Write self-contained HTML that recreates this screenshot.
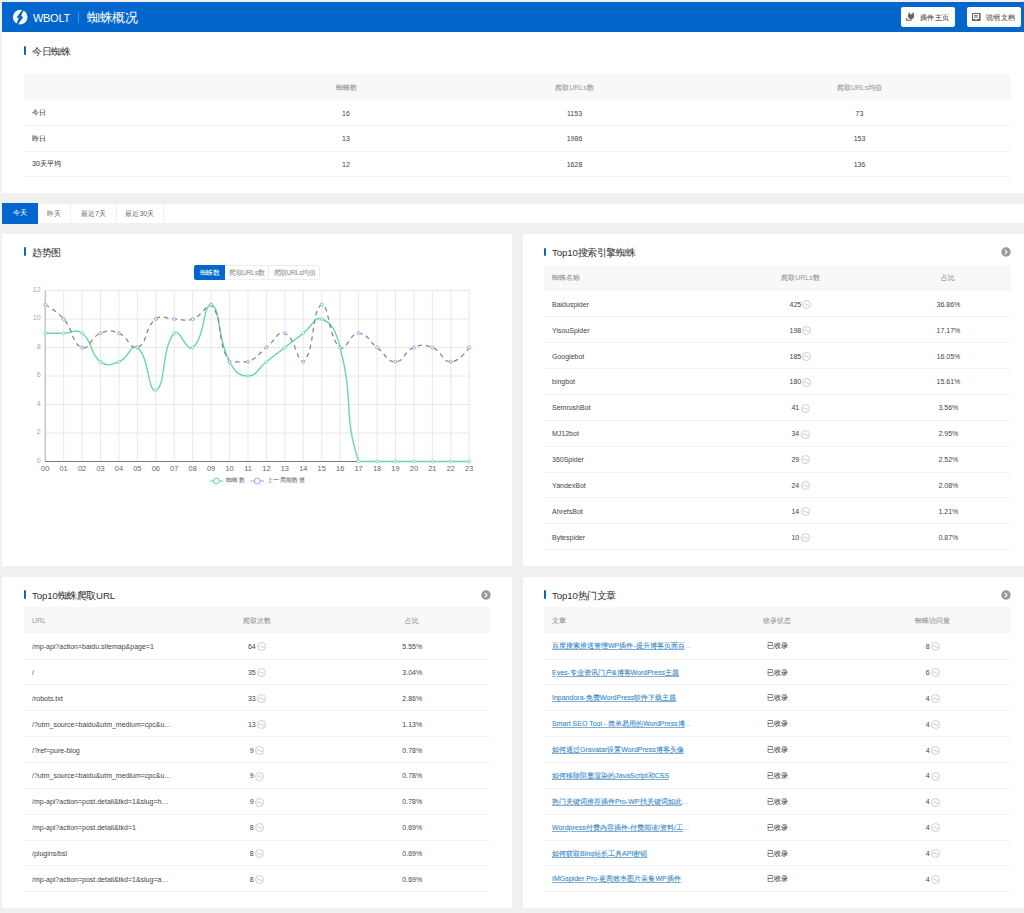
<!DOCTYPE html><html><head><meta charset="utf-8"><style>
*{margin:0;padding:0;box-sizing:border-box}
html,body{width:1024px;height:913px;overflow:hidden;background:#f0f0f1;font-family:"Liberation Sans",sans-serif;color:#333}
.ttl{-webkit-text-stroke:0.03px currentColor}.tbl th .cj{-webkit-text-stroke:0.1px currentColor}.cj{-webkit-text-stroke:0.08px currentColor}
.abs{position:absolute}
.card{position:absolute;background:#fff}
.bar{position:absolute;width:2px;height:8.5px;background:#0366cc;border-radius:1px}
.ttl{position:absolute;font-size:10px;line-height:12px;color:#333;white-space:nowrap;letter-spacing:-0.1px;transform:scale(0.965);transform-origin:left top}
.sc{display:inline-block;transform-origin:center center}
.tbl{position:absolute;border-collapse:collapse;table-layout:fixed;font-size:7px;color:#444}
.tbl th{background:#f8f8f8;color:#999;font-weight:normal;height:26px;padding:1px 8px 0;white-space:nowrap}
.tbl td{border-bottom:1px solid #f3f3f3;padding:1.1px 8px 0;white-space:nowrap;overflow:hidden;text-overflow:ellipsis}
.l{text-align:left}.c{text-align:center}
.ico{display:inline-block;vertical-align:middle;margin:-4px 0 -4px 1.3px;position:relative;top:-0.4px}
.arr{position:absolute;width:9.5px;height:9.5px;border-radius:50%;background:#999}
a{color:#3385c4;text-decoration:underline;text-decoration-thickness:0.6px;text-decoration-color:#7fb0d8}
.tbl td.lk{color:#aaa}
</style></head><body><div class="abs" style="left:2px;top:2px;width:1022px;height:30px;background:#0366cc"></div>
<svg class="abs" style="left:0;top:0" width="40" height="32"><circle cx="20.2" cy="17.1" r="7.3" fill="#fff"/><polygon points="22.49,9.45 23.80,9.98 21.17,15.76 23.14,17.30 18.11,24.31 16.57,23.65 18.76,18.06 16.57,17.41" fill="#0366cc"/></svg>
<div class="abs" style="left:33px;top:11.8px;font-size:11px;line-height:12px;color:#fff;letter-spacing:-0.3px">WBOLT</div>
<div class="abs" style="left:78px;top:11.5px;width:1px;height:11px;background:#3a9ad0"></div>
<div class="abs" style="left:87px;top:11px;font-size:13px;line-height:14px;color:#fff;white-space:nowrap;transform:scale(0.977);transform-origin:left top">蜘蛛概况</div>
<div class="abs" style="left:900.5px;top:7px;width:54.89999999999998px;height:19.5px;background:#fff;border-radius:2px"></div>
<svg class="abs" style="left:0;top:0" width="1024" height="32">
<rect x="908.6" y="12.7" width="1.5" height="2.4" fill="#666"/><rect x="912.2" y="12.7" width="1.5" height="2.4" fill="#666"/>
<path d="M908 14.3 L914.1 14.3 L914.1 15.9 Q914.1 18.7 911.05 18.9 Q908 18.7 908 15.9 Z" fill="#666"/>
<path d="M911.05 18.6 L911.05 20.2 L906.7 20.2 L906.7 17.9" fill="none" stroke="#666" stroke-width="1.1"/>
</svg>
<div class="abs cj" style="left:919.8px;top:13px;font-size:8px;line-height:9px;color:#444;white-space:nowrap;transform:scale(0.93);transform-origin:left top">插件主页</div>
<div class="abs" style="left:966.6px;top:7px;width:54.89999999999998px;height:19.5px;background:#fff;border-radius:2px"></div>
<svg class="abs" style="left:972px;top:12.8px" width="9" height="8.2" viewBox="0 0 9 8.2">
<rect x="0" y="0" width="8.6" height="8.0" rx="0.6" fill="#666"/>
<rect x="1.0" y="1.0" width="6.0" height="4.9" fill="#fff"/>
<rect x="2.1" y="2.2" width="3.7" height="0.9" fill="#666"/>
<rect x="2.1" y="3.6" width="3.7" height="1.0" fill="#666"/>
<ellipse cx="4.0" cy="5.7" rx="1.25" ry="1.05" fill="#fff"/>
</svg>
<div class="abs cj" style="left:985.9px;top:13px;font-size:8px;line-height:9px;color:#444;white-space:nowrap;transform:scale(0.93);transform-origin:left top">说明文档</div>
<div class="card" style="left:2px;top:32px;width:1030px;height:160.5px"></div>
<div class="bar" style="left:23.5px;top:46px"></div>
<div class="ttl" style="left:31.5px;top:45.7px">今日蜘蛛</div>
<table class="tbl" style="left:24px;top:74px;width:987px"><colgroup><col style="width:227px"><col style="width:190px"><col style="width:267px"><col style="width:303px"></colgroup><tr><th class="l" style="height:26px"></th><th class="c" style="height:26px"><span class="cj">蜘蛛数</span></th><th class="c" style="height:26px"><span class="cj">爬取</span>URLs<span class="cj">数</span></th><th class="c" style="height:26px"><span class="cj">爬取</span>URLs<span class="cj">均值</span></th></tr><tr><td class="l " style="height:25.5px"><span class=cj>今日</span></td><td class="c" style="height:25.5px">16</td><td class="c" style="height:25.5px">1153</td><td class="c" style="height:25.5px">73</td></tr><tr><td class="l " style="height:25.5px"><span class=cj>昨日</span></td><td class="c" style="height:25.5px">13</td><td class="c" style="height:25.5px">1986</td><td class="c" style="height:25.5px">153</td></tr><tr><td class="l " style="height:25.5px"><span class=cj>30天平均</span></td><td class="c" style="height:25.5px">12</td><td class="c" style="height:25.5px">1628</td><td class="c" style="height:25.5px">136</td></tr></table>
<div class="abs" style="left:2px;top:203.6px;width:1022px;height:19.3px;background:#fff"></div>
<div class="abs" style="left:2px;top:203px;width:35.5px;height:20.6px;background:#0366cc;color:#fff;font-size:7px;line-height:20.6px;text-align:center">今天</div>
<div class="abs" style="left:37.5px;top:203.6px;width:33.8px;height:19.3px;border-right:1px solid #f0f0f0;color:#666;font-size:7px;line-height:19.3px;text-align:center">昨天</div>
<div class="abs" style="left:71.3px;top:203.6px;width:45.3px;height:19.3px;border-right:1px solid #f0f0f0;color:#666;font-size:7px;line-height:19.3px;text-align:center">最近7天</div>
<div class="abs" style="left:116.6px;top:203.6px;width:47.400000000000006px;height:19.3px;border-right:1px solid #f0f0f0;color:#666;font-size:7px;line-height:19.3px;text-align:center">最近30天</div>
<div class="card" style="left:2px;top:234px;width:510px;height:332px"></div>
<div class="bar" style="left:23.5px;top:247.2px"></div>
<div class="ttl" style="left:31.5px;top:246.89999999999998px">趋势图</div>
<div class="abs" style="left:194px;top:265.2px;width:125.5px;height:14.8px;border:1px solid #eee;border-radius:2px"></div>
<div class="abs" style="left:194px;top:265.2px;width:31px;height:14.8px;background:#0366cc;border-radius:2px 0 0 2px;color:#fff;font-size:7px;line-height:16.6px;text-align:center"><span class="sc" style="transform:scale(0.93)">蜘蛛数</span></div>
<div class="abs" style="left:225px;top:265.2px;width:44px;height:14.8px;border-right:1px solid #eee;color:#888;font-size:7px;line-height:16.6px;text-align:center;letter-spacing:-0.1px"><span class="sc" style="transform:scale(0.93)">爬取URLs数</span></div>
<div class="abs" style="left:269px;top:265.2px;width:50.5px;height:14.8px;color:#888;font-size:7px;line-height:16.6px;text-align:center;letter-spacing:-0.1px"><span class="sc" style="transform:scale(0.93)">爬取URLs均值</span></div>
<svg class="abs" style="left:0;top:0" width="512" height="566" viewBox="0 0 512 566"><text x="40.8" y="462.90" font-size="7.2" fill="#aaa" text-anchor="end" font-family="Liberation Sans">0</text><line x1="45.20" y1="433.00" x2="469.20" y2="433.00" stroke="#e8e8e8" stroke-width="1"/><text x="40.8" y="434.40" font-size="7.2" fill="#aaa" text-anchor="end" font-family="Liberation Sans">2</text><line x1="45.20" y1="404.50" x2="469.20" y2="404.50" stroke="#e8e8e8" stroke-width="1"/><text x="40.8" y="405.90" font-size="7.2" fill="#aaa" text-anchor="end" font-family="Liberation Sans">4</text><line x1="45.20" y1="376.00" x2="469.20" y2="376.00" stroke="#e8e8e8" stroke-width="1"/><text x="40.8" y="377.40" font-size="7.2" fill="#aaa" text-anchor="end" font-family="Liberation Sans">6</text><line x1="45.20" y1="347.50" x2="469.20" y2="347.50" stroke="#e8e8e8" stroke-width="1"/><text x="40.8" y="348.90" font-size="7.2" fill="#aaa" text-anchor="end" font-family="Liberation Sans">8</text><line x1="45.20" y1="319.00" x2="469.20" y2="319.00" stroke="#e8e8e8" stroke-width="1"/><text x="40.8" y="320.40" font-size="7.2" fill="#aaa" text-anchor="end" font-family="Liberation Sans">10</text><line x1="45.20" y1="290.50" x2="469.20" y2="290.50" stroke="#e8e8e8" stroke-width="1"/><text x="40.8" y="291.90" font-size="7.2" fill="#aaa" text-anchor="end" font-family="Liberation Sans">12</text><text x="45.20" y="470.7" font-size="7.4" fill="#666" text-anchor="middle" font-family="Liberation Sans">00</text><line x1="63.63" y1="290.50" x2="63.63" y2="461.50" stroke="#e8e8e8" stroke-width="1"/><text x="63.63" y="470.7" font-size="7.4" fill="#666" text-anchor="middle" font-family="Liberation Sans">01</text><line x1="82.07" y1="290.50" x2="82.07" y2="461.50" stroke="#e8e8e8" stroke-width="1"/><text x="82.07" y="470.7" font-size="7.4" fill="#666" text-anchor="middle" font-family="Liberation Sans">02</text><line x1="100.50" y1="290.50" x2="100.50" y2="461.50" stroke="#e8e8e8" stroke-width="1"/><text x="100.50" y="470.7" font-size="7.4" fill="#666" text-anchor="middle" font-family="Liberation Sans">03</text><line x1="118.94" y1="290.50" x2="118.94" y2="461.50" stroke="#e8e8e8" stroke-width="1"/><text x="118.94" y="470.7" font-size="7.4" fill="#666" text-anchor="middle" font-family="Liberation Sans">04</text><line x1="137.37" y1="290.50" x2="137.37" y2="461.50" stroke="#e8e8e8" stroke-width="1"/><text x="137.37" y="470.7" font-size="7.4" fill="#666" text-anchor="middle" font-family="Liberation Sans">05</text><line x1="155.81" y1="290.50" x2="155.81" y2="461.50" stroke="#e8e8e8" stroke-width="1"/><text x="155.81" y="470.7" font-size="7.4" fill="#666" text-anchor="middle" font-family="Liberation Sans">06</text><line x1="174.24" y1="290.50" x2="174.24" y2="461.50" stroke="#e8e8e8" stroke-width="1"/><text x="174.24" y="470.7" font-size="7.4" fill="#666" text-anchor="middle" font-family="Liberation Sans">07</text><line x1="192.68" y1="290.50" x2="192.68" y2="461.50" stroke="#e8e8e8" stroke-width="1"/><text x="192.68" y="470.7" font-size="7.4" fill="#666" text-anchor="middle" font-family="Liberation Sans">08</text><line x1="211.11" y1="290.50" x2="211.11" y2="461.50" stroke="#e8e8e8" stroke-width="1"/><text x="211.11" y="470.7" font-size="7.4" fill="#666" text-anchor="middle" font-family="Liberation Sans">09</text><line x1="229.55" y1="290.50" x2="229.55" y2="461.50" stroke="#e8e8e8" stroke-width="1"/><text x="229.55" y="470.7" font-size="7.4" fill="#666" text-anchor="middle" font-family="Liberation Sans">10</text><line x1="247.98" y1="290.50" x2="247.98" y2="461.50" stroke="#e8e8e8" stroke-width="1"/><text x="247.98" y="470.7" font-size="7.4" fill="#666" text-anchor="middle" font-family="Liberation Sans">11</text><line x1="266.42" y1="290.50" x2="266.42" y2="461.50" stroke="#e8e8e8" stroke-width="1"/><text x="266.42" y="470.7" font-size="7.4" fill="#666" text-anchor="middle" font-family="Liberation Sans">12</text><line x1="284.85" y1="290.50" x2="284.85" y2="461.50" stroke="#e8e8e8" stroke-width="1"/><text x="284.85" y="470.7" font-size="7.4" fill="#666" text-anchor="middle" font-family="Liberation Sans">13</text><line x1="303.29" y1="290.50" x2="303.29" y2="461.50" stroke="#e8e8e8" stroke-width="1"/><text x="303.29" y="470.7" font-size="7.4" fill="#666" text-anchor="middle" font-family="Liberation Sans">14</text><line x1="321.72" y1="290.50" x2="321.72" y2="461.50" stroke="#e8e8e8" stroke-width="1"/><text x="321.72" y="470.7" font-size="7.4" fill="#666" text-anchor="middle" font-family="Liberation Sans">15</text><line x1="340.16" y1="290.50" x2="340.16" y2="461.50" stroke="#e8e8e8" stroke-width="1"/><text x="340.16" y="470.7" font-size="7.4" fill="#666" text-anchor="middle" font-family="Liberation Sans">16</text><line x1="358.59" y1="290.50" x2="358.59" y2="461.50" stroke="#e8e8e8" stroke-width="1"/><text x="358.59" y="470.7" font-size="7.4" fill="#666" text-anchor="middle" font-family="Liberation Sans">17</text><line x1="377.03" y1="290.50" x2="377.03" y2="461.50" stroke="#e8e8e8" stroke-width="1"/><text x="377.03" y="470.7" font-size="7.4" fill="#666" text-anchor="middle" font-family="Liberation Sans">18</text><line x1="395.46" y1="290.50" x2="395.46" y2="461.50" stroke="#e8e8e8" stroke-width="1"/><text x="395.46" y="470.7" font-size="7.4" fill="#666" text-anchor="middle" font-family="Liberation Sans">19</text><line x1="413.90" y1="290.50" x2="413.90" y2="461.50" stroke="#e8e8e8" stroke-width="1"/><text x="413.90" y="470.7" font-size="7.4" fill="#666" text-anchor="middle" font-family="Liberation Sans">20</text><line x1="432.33" y1="290.50" x2="432.33" y2="461.50" stroke="#e8e8e8" stroke-width="1"/><text x="432.33" y="470.7" font-size="7.4" fill="#666" text-anchor="middle" font-family="Liberation Sans">21</text><line x1="450.77" y1="290.50" x2="450.77" y2="461.50" stroke="#e8e8e8" stroke-width="1"/><text x="450.77" y="470.7" font-size="7.4" fill="#666" text-anchor="middle" font-family="Liberation Sans">22</text><line x1="469.20" y1="290.50" x2="469.20" y2="461.50" stroke="#e8e8e8" stroke-width="1"/><text x="469.20" y="470.7" font-size="7.4" fill="#666" text-anchor="middle" font-family="Liberation Sans">23</text><line x1="45.20" y1="290.50" x2="45.20" y2="461.50" stroke="#aaa" stroke-width="1"/><line x1="45.20" y1="461.50" x2="469.20" y2="461.50" stroke="#777" stroke-width="1"/><path d="M45.20 333.25 C45.20 333.25 54.42 333.25 63.63 333.25 C72.85 333.25 75.58 328.23 82.07 333.25 C94.02 342.48 88.56 352.52 100.50 361.75 C106.99 366.77 110.80 364.90 118.94 361.75 C129.23 357.77 131.23 342.75 137.37 347.50 C149.66 357.00 147.75 393.37 155.81 390.25 C166.18 386.24 160.97 348.64 174.24 333.25 C179.41 327.26 186.53 352.25 192.68 347.50 C204.96 338.00 203.05 304.75 211.11 304.75 C221.49 308.76 216.28 336.10 229.55 361.75 C234.71 371.73 238.77 376.00 247.98 376.00 C257.20 376.00 257.20 368.88 266.42 361.75 C275.63 354.62 275.63 354.62 284.85 347.50 C294.07 340.38 294.07 340.38 303.29 333.25 C312.50 326.12 314.22 316.10 321.72 319.00 C332.65 323.22 335.97 331.32 340.16 347.50 C354.40 402.57 342.69 412.35 358.59 461.50 C361.13 461.50 367.81 461.50 377.03 461.50 C386.24 461.50 386.24 461.50 395.46 461.50 C404.68 461.50 404.68 461.50 413.90 461.50 C423.11 461.50 423.11 461.50 432.33 461.50 C441.55 461.50 441.55 461.50 450.77 461.50 C459.98 461.50 469.20 461.50 469.20 461.50" fill="none" stroke="#68d8a8" stroke-width="1.4"/><circle cx="45.20" cy="333.25" r="1.4" fill="#fff" stroke="#68d8a8" stroke-width="0.8"/><circle cx="63.63" cy="333.25" r="1.4" fill="#fff" stroke="#68d8a8" stroke-width="0.8"/><circle cx="82.07" cy="333.25" r="1.4" fill="#fff" stroke="#68d8a8" stroke-width="0.8"/><circle cx="100.50" cy="361.75" r="1.4" fill="#fff" stroke="#68d8a8" stroke-width="0.8"/><circle cx="118.94" cy="361.75" r="1.4" fill="#fff" stroke="#68d8a8" stroke-width="0.8"/><circle cx="137.37" cy="347.50" r="1.4" fill="#fff" stroke="#68d8a8" stroke-width="0.8"/><circle cx="155.81" cy="390.25" r="1.4" fill="#fff" stroke="#68d8a8" stroke-width="0.8"/><circle cx="174.24" cy="333.25" r="1.4" fill="#fff" stroke="#68d8a8" stroke-width="0.8"/><circle cx="192.68" cy="347.50" r="1.4" fill="#fff" stroke="#68d8a8" stroke-width="0.8"/><circle cx="211.11" cy="304.75" r="1.4" fill="#fff" stroke="#68d8a8" stroke-width="0.8"/><circle cx="229.55" cy="361.75" r="1.4" fill="#fff" stroke="#68d8a8" stroke-width="0.8"/><circle cx="247.98" cy="376.00" r="1.4" fill="#fff" stroke="#68d8a8" stroke-width="0.8"/><circle cx="266.42" cy="361.75" r="1.4" fill="#fff" stroke="#68d8a8" stroke-width="0.8"/><circle cx="284.85" cy="347.50" r="1.4" fill="#fff" stroke="#68d8a8" stroke-width="0.8"/><circle cx="303.29" cy="333.25" r="1.4" fill="#fff" stroke="#68d8a8" stroke-width="0.8"/><circle cx="321.72" cy="319.00" r="1.4" fill="#fff" stroke="#68d8a8" stroke-width="0.8"/><circle cx="340.16" cy="347.50" r="1.4" fill="#fff" stroke="#68d8a8" stroke-width="0.8"/><circle cx="358.59" cy="461.50" r="1.4" fill="#fff" stroke="#68d8a8" stroke-width="0.8"/><circle cx="377.03" cy="461.50" r="1.4" fill="#fff" stroke="#68d8a8" stroke-width="0.8"/><circle cx="395.46" cy="461.50" r="1.4" fill="#fff" stroke="#68d8a8" stroke-width="0.8"/><circle cx="413.90" cy="461.50" r="1.4" fill="#fff" stroke="#68d8a8" stroke-width="0.8"/><circle cx="432.33" cy="461.50" r="1.4" fill="#fff" stroke="#68d8a8" stroke-width="0.8"/><circle cx="450.77" cy="461.50" r="1.4" fill="#fff" stroke="#68d8a8" stroke-width="0.8"/><circle cx="469.20" cy="461.50" r="1.4" fill="#fff" stroke="#68d8a8" stroke-width="0.8"/><path d="M45.20 304.75 C45.20 304.75 56.13 310.30 63.63 319.00 C74.57 331.67 71.14 343.28 82.07 347.50 C89.57 350.40 90.21 337.23 100.50 333.25 C108.65 330.10 110.80 330.10 118.94 333.25 C129.23 337.23 129.87 350.40 137.37 347.50 C148.30 343.28 143.86 328.23 155.81 319.00 C162.30 313.98 165.03 319.00 174.24 319.00 C183.46 319.00 184.54 322.15 192.68 319.00 C202.97 315.02 205.95 304.75 211.11 304.75 C224.39 320.14 215.45 339.96 229.55 361.75 C233.89 361.75 239.84 361.75 247.98 361.75 C258.27 357.77 257.20 354.62 266.42 347.50 C275.63 340.38 277.35 330.35 284.85 333.25 C295.78 337.47 296.62 361.75 303.29 361.75 C315.05 352.65 311.35 308.76 321.72 304.75 C329.78 304.75 327.87 338.00 340.16 347.50 C346.31 352.25 349.37 333.25 358.59 333.25 C367.81 333.25 367.81 340.38 377.03 347.50 C386.24 354.62 386.24 361.75 395.46 361.75 C404.68 361.75 403.60 351.48 413.90 347.50 C422.04 344.35 424.19 344.35 432.33 347.50 C442.62 351.48 441.55 361.75 450.77 361.75 C459.98 361.75 469.20 347.50 469.20 347.50" fill="none" stroke="#858585" stroke-width="1.25" stroke-dasharray="4.5 4"/><circle cx="45.20" cy="304.75" r="1.55" fill="#e6ecfd" stroke="#98b2f6" stroke-width="1"/><circle cx="63.63" cy="319.00" r="1.55" fill="#e6ecfd" stroke="#98b2f6" stroke-width="1"/><circle cx="82.07" cy="347.50" r="1.55" fill="#e6ecfd" stroke="#98b2f6" stroke-width="1"/><circle cx="100.50" cy="333.25" r="1.55" fill="#e6ecfd" stroke="#98b2f6" stroke-width="1"/><circle cx="118.94" cy="333.25" r="1.55" fill="#e6ecfd" stroke="#98b2f6" stroke-width="1"/><circle cx="137.37" cy="347.50" r="1.55" fill="#e6ecfd" stroke="#98b2f6" stroke-width="1"/><circle cx="155.81" cy="319.00" r="1.55" fill="#e6ecfd" stroke="#98b2f6" stroke-width="1"/><circle cx="174.24" cy="319.00" r="1.55" fill="#e6ecfd" stroke="#98b2f6" stroke-width="1"/><circle cx="192.68" cy="319.00" r="1.55" fill="#e6ecfd" stroke="#98b2f6" stroke-width="1"/><circle cx="211.11" cy="304.75" r="1.55" fill="#e6ecfd" stroke="#98b2f6" stroke-width="1"/><circle cx="229.55" cy="361.75" r="1.55" fill="#e6ecfd" stroke="#98b2f6" stroke-width="1"/><circle cx="247.98" cy="361.75" r="1.55" fill="#e6ecfd" stroke="#98b2f6" stroke-width="1"/><circle cx="266.42" cy="347.50" r="1.55" fill="#e6ecfd" stroke="#98b2f6" stroke-width="1"/><circle cx="284.85" cy="333.25" r="1.55" fill="#e6ecfd" stroke="#98b2f6" stroke-width="1"/><circle cx="303.29" cy="361.75" r="1.55" fill="#e6ecfd" stroke="#98b2f6" stroke-width="1"/><circle cx="321.72" cy="304.75" r="1.55" fill="#e6ecfd" stroke="#98b2f6" stroke-width="1"/><circle cx="340.16" cy="347.50" r="1.55" fill="#e6ecfd" stroke="#98b2f6" stroke-width="1"/><circle cx="358.59" cy="333.25" r="1.55" fill="#e6ecfd" stroke="#98b2f6" stroke-width="1"/><circle cx="377.03" cy="347.50" r="1.55" fill="#e6ecfd" stroke="#98b2f6" stroke-width="1"/><circle cx="395.46" cy="361.75" r="1.55" fill="#e6ecfd" stroke="#98b2f6" stroke-width="1"/><circle cx="413.90" cy="347.50" r="1.55" fill="#e6ecfd" stroke="#98b2f6" stroke-width="1"/><circle cx="432.33" cy="347.50" r="1.55" fill="#e6ecfd" stroke="#98b2f6" stroke-width="1"/><circle cx="450.77" cy="361.75" r="1.55" fill="#e6ecfd" stroke="#98b2f6" stroke-width="1"/><circle cx="469.20" cy="347.50" r="1.55" fill="#e6ecfd" stroke="#98b2f6" stroke-width="1"/><line x1="210" y1="481" x2="223" y2="481" stroke="#5fd3a2" stroke-width="1"/><circle cx="216.4" cy="481" r="2.9" fill="#fff" stroke="#5fd3a2" stroke-width="1"/><line x1="250.4" y1="481" x2="264" y2="481" stroke="#8eaaf5" stroke-width="1"/><circle cx="257.2" cy="481" r="2.9" fill="#fff" stroke="#8eaaf5" stroke-width="1"/></svg>
<div class="abs" style="left:226px;top:475.6px;font-size:7px;line-height:9px;color:#555;white-space:nowrap;transform:scale(0.91);transform-origin:left top">蜘蛛数</div>
<div class="abs" style="left:266.8px;top:475.6px;font-size:7px;line-height:9px;color:#555;white-space:nowrap;transform:scale(0.91);transform-origin:left top">上一周期数值</div>
<div class="card" style="left:523px;top:234px;width:509px;height:332px"></div>
<div class="bar" style="left:544px;top:247.6px"></div>
<div class="ttl" style="left:552px;top:247.29999999999998px">Top10搜索引擎蜘蛛</div>
<svg class="abs" style="left:1001.2px;top:247px" width="10" height="10" viewBox="0 0 10 10"><circle cx="5" cy="5" r="4.7" fill="#999"/><path d="M4.2 3.2 L5.9 5 L4.2 6.8" stroke="#fff" stroke-width="1.2" fill="none" stroke-linecap="round" stroke-linejoin="round"/></svg>
<table class="tbl" style="left:544px;top:264.8px;width:467.0px"><colgroup><col style="width:171.2px"><col style="width:170.6px"><col style="width:125.2px"></colgroup><tr><th class="l" style="height:26px"><span class="cj">蜘蛛名称</span></th><th class="c" style="height:26px"><span class="cj">爬取</span>URLs<span class="cj">数</span></th><th class="c" style="height:26px"><span class="cj">占比</span></th></tr><tr><td class="l " style="height:25.9px">Baiduspider</td><td class="c" style="height:25.9px">425<svg class="ico" width="9" height="9" viewBox="0 0 9 9"><circle cx="4.5" cy="4.5" r="4.0" fill="none" stroke="#c2c2c2" stroke-width="0.8"/><path d="M1.7 4.9 L3.7 3.6 L4.9 5.1 L7.3 5.3" fill="none" stroke="#bbb" stroke-width="0.75"/></svg></td><td class="c" style="height:25.9px">36.86%</td></tr><tr><td class="l " style="height:25.9px">YisouSpider</td><td class="c" style="height:25.9px">198<svg class="ico" width="9" height="9" viewBox="0 0 9 9"><circle cx="4.5" cy="4.5" r="4.0" fill="none" stroke="#c2c2c2" stroke-width="0.8"/><path d="M1.7 4.9 L3.7 3.6 L4.9 5.1 L7.3 5.3" fill="none" stroke="#bbb" stroke-width="0.75"/></svg></td><td class="c" style="height:25.9px">17.17%</td></tr><tr><td class="l " style="height:25.9px">Googlebot</td><td class="c" style="height:25.9px">185<svg class="ico" width="9" height="9" viewBox="0 0 9 9"><circle cx="4.5" cy="4.5" r="4.0" fill="none" stroke="#c2c2c2" stroke-width="0.8"/><path d="M1.7 4.9 L3.7 3.6 L4.9 5.1 L7.3 5.3" fill="none" stroke="#bbb" stroke-width="0.75"/></svg></td><td class="c" style="height:25.9px">16.05%</td></tr><tr><td class="l " style="height:25.9px">bingbot</td><td class="c" style="height:25.9px">180<svg class="ico" width="9" height="9" viewBox="0 0 9 9"><circle cx="4.5" cy="4.5" r="4.0" fill="none" stroke="#c2c2c2" stroke-width="0.8"/><path d="M1.7 4.9 L3.7 3.6 L4.9 5.1 L7.3 5.3" fill="none" stroke="#bbb" stroke-width="0.75"/></svg></td><td class="c" style="height:25.9px">15.61%</td></tr><tr><td class="l " style="height:25.9px">SemrushBot</td><td class="c" style="height:25.9px">41<svg class="ico" width="9" height="9" viewBox="0 0 9 9"><circle cx="4.5" cy="4.5" r="4.0" fill="none" stroke="#c2c2c2" stroke-width="0.8"/><path d="M1.7 4.9 L3.7 3.6 L4.9 5.1 L7.3 5.3" fill="none" stroke="#bbb" stroke-width="0.75"/></svg></td><td class="c" style="height:25.9px">3.56%</td></tr><tr><td class="l " style="height:25.9px">MJ12bot</td><td class="c" style="height:25.9px">34<svg class="ico" width="9" height="9" viewBox="0 0 9 9"><circle cx="4.5" cy="4.5" r="4.0" fill="none" stroke="#c2c2c2" stroke-width="0.8"/><path d="M1.7 4.9 L3.7 3.6 L4.9 5.1 L7.3 5.3" fill="none" stroke="#bbb" stroke-width="0.75"/></svg></td><td class="c" style="height:25.9px">2.95%</td></tr><tr><td class="l " style="height:25.9px">360Spider</td><td class="c" style="height:25.9px">29<svg class="ico" width="9" height="9" viewBox="0 0 9 9"><circle cx="4.5" cy="4.5" r="4.0" fill="none" stroke="#c2c2c2" stroke-width="0.8"/><path d="M1.7 4.9 L3.7 3.6 L4.9 5.1 L7.3 5.3" fill="none" stroke="#bbb" stroke-width="0.75"/></svg></td><td class="c" style="height:25.9px">2.52%</td></tr><tr><td class="l " style="height:25.9px">YandexBot</td><td class="c" style="height:25.9px">24<svg class="ico" width="9" height="9" viewBox="0 0 9 9"><circle cx="4.5" cy="4.5" r="4.0" fill="none" stroke="#c2c2c2" stroke-width="0.8"/><path d="M1.7 4.9 L3.7 3.6 L4.9 5.1 L7.3 5.3" fill="none" stroke="#bbb" stroke-width="0.75"/></svg></td><td class="c" style="height:25.9px">2.08%</td></tr><tr><td class="l " style="height:25.9px">AhrefsBot</td><td class="c" style="height:25.9px">14<svg class="ico" width="9" height="9" viewBox="0 0 9 9"><circle cx="4.5" cy="4.5" r="4.0" fill="none" stroke="#c2c2c2" stroke-width="0.8"/><path d="M1.7 4.9 L3.7 3.6 L4.9 5.1 L7.3 5.3" fill="none" stroke="#bbb" stroke-width="0.75"/></svg></td><td class="c" style="height:25.9px">1.21%</td></tr><tr><td class="l " style="height:25.9px">Bytespider</td><td class="c" style="height:25.9px">10<svg class="ico" width="9" height="9" viewBox="0 0 9 9"><circle cx="4.5" cy="4.5" r="4.0" fill="none" stroke="#c2c2c2" stroke-width="0.8"/><path d="M1.7 4.9 L3.7 3.6 L4.9 5.1 L7.3 5.3" fill="none" stroke="#bbb" stroke-width="0.75"/></svg></td><td class="c" style="height:25.9px">0.87%</td></tr></table>
<div class="card" style="left:2px;top:576.8px;width:510px;height:331.2px"></div>
<div class="bar" style="left:23.5px;top:590px"></div>
<div class="ttl" style="left:31.5px;top:589.7px">Top10蜘蛛爬取URL</div>
<svg class="abs" style="left:480.9px;top:589.6px" width="10" height="10" viewBox="0 0 10 10"><circle cx="5" cy="5" r="4.7" fill="#999"/><path d="M4.2 3.2 L5.9 5 L4.2 6.8" stroke="#fff" stroke-width="1.2" fill="none" stroke-linecap="round" stroke-linejoin="round"/></svg>
<table class="tbl" style="left:24px;top:607.2px;width:466.0px"><colgroup><col style="width:155.3px"><col style="width:155.3px"><col style="width:155.4px"></colgroup><tr><th class="l" style="height:26px">URL</th><th class="c" style="height:26px"><span class="cj">爬取次数</span></th><th class="c" style="height:26px"><span class="cj">占比</span></th></tr><tr><td class="l " style="height:25.86px">/mp-api?action=baidu.sitemap&amp;page=1</td><td class="c" style="height:25.86px">64<svg class="ico" width="9" height="9" viewBox="0 0 9 9"><circle cx="4.5" cy="4.5" r="4.0" fill="none" stroke="#c2c2c2" stroke-width="0.8"/><path d="M1.7 4.9 L3.7 3.6 L4.9 5.1 L7.3 5.3" fill="none" stroke="#bbb" stroke-width="0.75"/></svg></td><td class="c" style="height:25.86px">5.55%</td></tr><tr><td class="l " style="height:25.86px">/</td><td class="c" style="height:25.86px">35<svg class="ico" width="9" height="9" viewBox="0 0 9 9"><circle cx="4.5" cy="4.5" r="4.0" fill="none" stroke="#c2c2c2" stroke-width="0.8"/><path d="M1.7 4.9 L3.7 3.6 L4.9 5.1 L7.3 5.3" fill="none" stroke="#bbb" stroke-width="0.75"/></svg></td><td class="c" style="height:25.86px">3.04%</td></tr><tr><td class="l " style="height:25.86px">/robots.txt</td><td class="c" style="height:25.86px">33<svg class="ico" width="9" height="9" viewBox="0 0 9 9"><circle cx="4.5" cy="4.5" r="4.0" fill="none" stroke="#c2c2c2" stroke-width="0.8"/><path d="M1.7 4.9 L3.7 3.6 L4.9 5.1 L7.3 5.3" fill="none" stroke="#bbb" stroke-width="0.75"/></svg></td><td class="c" style="height:25.86px">2.86%</td></tr><tr><td class="l " style="height:25.86px">/?utm_source=baidu&amp;utm_medium=cpc&amp;utm_term=abc</td><td class="c" style="height:25.86px">13<svg class="ico" width="9" height="9" viewBox="0 0 9 9"><circle cx="4.5" cy="4.5" r="4.0" fill="none" stroke="#c2c2c2" stroke-width="0.8"/><path d="M1.7 4.9 L3.7 3.6 L4.9 5.1 L7.3 5.3" fill="none" stroke="#bbb" stroke-width="0.75"/></svg></td><td class="c" style="height:25.86px">1.13%</td></tr><tr><td class="l " style="height:25.86px">/?ref=pure-blog</td><td class="c" style="height:25.86px">9<svg class="ico" width="9" height="9" viewBox="0 0 9 9"><circle cx="4.5" cy="4.5" r="4.0" fill="none" stroke="#c2c2c2" stroke-width="0.8"/><path d="M1.7 4.9 L3.7 3.6 L4.9 5.1 L7.3 5.3" fill="none" stroke="#bbb" stroke-width="0.75"/></svg></td><td class="c" style="height:25.86px">0.78%</td></tr><tr><td class="l " style="height:25.86px">/?utm_source=baidu&amp;utm_medium=cpc&amp;utm_term=xyz</td><td class="c" style="height:25.86px">9<svg class="ico" width="9" height="9" viewBox="0 0 9 9"><circle cx="4.5" cy="4.5" r="4.0" fill="none" stroke="#c2c2c2" stroke-width="0.8"/><path d="M1.7 4.9 L3.7 3.6 L4.9 5.1 L7.3 5.3" fill="none" stroke="#bbb" stroke-width="0.75"/></svg></td><td class="c" style="height:25.86px">0.78%</td></tr><tr><td class="l " style="height:25.86px">/mp-api?action=post.detail&amp;tkd=1&amp;slug=hello-world</td><td class="c" style="height:25.86px">9<svg class="ico" width="9" height="9" viewBox="0 0 9 9"><circle cx="4.5" cy="4.5" r="4.0" fill="none" stroke="#c2c2c2" stroke-width="0.8"/><path d="M1.7 4.9 L3.7 3.6 L4.9 5.1 L7.3 5.3" fill="none" stroke="#bbb" stroke-width="0.75"/></svg></td><td class="c" style="height:25.86px">0.78%</td></tr><tr><td class="l " style="height:25.86px">/mp-api?action=post.detail&amp;tkd=1</td><td class="c" style="height:25.86px">8<svg class="ico" width="9" height="9" viewBox="0 0 9 9"><circle cx="4.5" cy="4.5" r="4.0" fill="none" stroke="#c2c2c2" stroke-width="0.8"/><path d="M1.7 4.9 L3.7 3.6 L4.9 5.1 L7.3 5.3" fill="none" stroke="#bbb" stroke-width="0.75"/></svg></td><td class="c" style="height:25.86px">0.69%</td></tr><tr><td class="l " style="height:25.86px">/plugins/bsl</td><td class="c" style="height:25.86px">8<svg class="ico" width="9" height="9" viewBox="0 0 9 9"><circle cx="4.5" cy="4.5" r="4.0" fill="none" stroke="#c2c2c2" stroke-width="0.8"/><path d="M1.7 4.9 L3.7 3.6 L4.9 5.1 L7.3 5.3" fill="none" stroke="#bbb" stroke-width="0.75"/></svg></td><td class="c" style="height:25.86px">0.69%</td></tr><tr><td class="l " style="height:25.86px">/mp-api?action=post.detail&amp;tkd=1&amp;slug=abcdefg</td><td class="c" style="height:25.86px">8<svg class="ico" width="9" height="9" viewBox="0 0 9 9"><circle cx="4.5" cy="4.5" r="4.0" fill="none" stroke="#c2c2c2" stroke-width="0.8"/><path d="M1.7 4.9 L3.7 3.6 L4.9 5.1 L7.3 5.3" fill="none" stroke="#bbb" stroke-width="0.75"/></svg></td><td class="c" style="height:25.86px">0.69%</td></tr></table>
<div class="card" style="left:523px;top:576.8px;width:509px;height:331.2px"></div>
<div class="bar" style="left:544px;top:590px"></div>
<div class="ttl" style="left:552px;top:589.7px">Top10热门文章</div>
<svg class="abs" style="left:1001.2px;top:589.6px" width="10" height="10" viewBox="0 0 10 10"><circle cx="5" cy="5" r="4.7" fill="#999"/><path d="M4.2 3.2 L5.9 5 L4.2 6.8" stroke="#fff" stroke-width="1.2" fill="none" stroke-linecap="round" stroke-linejoin="round"/></svg>
<table class="tbl" style="left:544px;top:607.2px;width:467.0px"><colgroup><col style="width:155.8px"><col style="width:155px"><col style="width:156.2px"></colgroup><tr><th class="l" style="height:26px"><span class="cj">文章</span></th><th class="c" style="height:26px"><span class="cj">收录状态</span></th><th class="c" style="height:26px"><span class="cj">蜘蛛访问量</span></th></tr><tr><td class="l lk" style="height:25.86px"><a class=cj>百度搜索推送管理WP插件-提升博客页面百度收录</a></td><td class="c" style="height:25.86px"><span class=cj>已收录</span></td><td class="c" style="height:25.86px">8<svg class="ico" width="9" height="9" viewBox="0 0 9 9"><circle cx="4.5" cy="4.5" r="4.0" fill="none" stroke="#c2c2c2" stroke-width="0.8"/><path d="M1.7 4.9 L3.7 3.6 L4.9 5.1 L7.3 5.3" fill="none" stroke="#bbb" stroke-width="0.75"/></svg></td></tr><tr><td class="l lk" style="height:25.86px"><a class=cj>Eyes-专业资讯门户&amp;博客WordPress主题</a></td><td class="c" style="height:25.86px"><span class=cj>已收录</span></td><td class="c" style="height:25.86px">6<svg class="ico" width="9" height="9" viewBox="0 0 9 9"><circle cx="4.5" cy="4.5" r="4.0" fill="none" stroke="#c2c2c2" stroke-width="0.8"/><path d="M1.7 4.9 L3.7 3.6 L4.9 5.1 L7.3 5.3" fill="none" stroke="#bbb" stroke-width="0.75"/></svg></td></tr><tr><td class="l lk" style="height:25.86px"><a class=cj>Inpandora-免费WordPress软件下载主题</a></td><td class="c" style="height:25.86px"><span class=cj>已收录</span></td><td class="c" style="height:25.86px">4<svg class="ico" width="9" height="9" viewBox="0 0 9 9"><circle cx="4.5" cy="4.5" r="4.0" fill="none" stroke="#c2c2c2" stroke-width="0.8"/><path d="M1.7 4.9 L3.7 3.6 L4.9 5.1 L7.3 5.3" fill="none" stroke="#bbb" stroke-width="0.75"/></svg></td></tr><tr><td class="l lk" style="height:25.86px"><a class=cj>Smart SEO Tool - 简单易用的WordPress博客SEO插件</a></td><td class="c" style="height:25.86px"><span class=cj>已收录</span></td><td class="c" style="height:25.86px">4<svg class="ico" width="9" height="9" viewBox="0 0 9 9"><circle cx="4.5" cy="4.5" r="4.0" fill="none" stroke="#c2c2c2" stroke-width="0.8"/><path d="M1.7 4.9 L3.7 3.6 L4.9 5.1 L7.3 5.3" fill="none" stroke="#bbb" stroke-width="0.75"/></svg></td></tr><tr><td class="l lk" style="height:25.86px"><a class=cj>如何通过Gravatar设置WordPress博客头像</a></td><td class="c" style="height:25.86px"><span class=cj>已收录</span></td><td class="c" style="height:25.86px">4<svg class="ico" width="9" height="9" viewBox="0 0 9 9"><circle cx="4.5" cy="4.5" r="4.0" fill="none" stroke="#c2c2c2" stroke-width="0.8"/><path d="M1.7 4.9 L3.7 3.6 L4.9 5.1 L7.3 5.3" fill="none" stroke="#bbb" stroke-width="0.75"/></svg></td></tr><tr><td class="l lk" style="height:25.86px"><a class=cj>如何移除阻塞渲染的JavaScript和CSS</a></td><td class="c" style="height:25.86px"><span class=cj>已收录</span></td><td class="c" style="height:25.86px">4<svg class="ico" width="9" height="9" viewBox="0 0 9 9"><circle cx="4.5" cy="4.5" r="4.0" fill="none" stroke="#c2c2c2" stroke-width="0.8"/><path d="M1.7 4.9 L3.7 3.6 L4.9 5.1 L7.3 5.3" fill="none" stroke="#bbb" stroke-width="0.75"/></svg></td></tr><tr><td class="l lk" style="height:25.86px"><a class=cj>热门关键词推荐插件Pro-WP找关键词如此简单</a></td><td class="c" style="height:25.86px"><span class=cj>已收录</span></td><td class="c" style="height:25.86px">4<svg class="ico" width="9" height="9" viewBox="0 0 9 9"><circle cx="4.5" cy="4.5" r="4.0" fill="none" stroke="#c2c2c2" stroke-width="0.8"/><path d="M1.7 4.9 L3.7 3.6 L4.9 5.1 L7.3 5.3" fill="none" stroke="#bbb" stroke-width="0.75"/></svg></td></tr><tr><td class="l lk" style="height:25.86px"><a class=cj>Wordpress付费内容插件-付费阅读/资料/工具下载</a></td><td class="c" style="height:25.86px"><span class=cj>已收录</span></td><td class="c" style="height:25.86px">4<svg class="ico" width="9" height="9" viewBox="0 0 9 9"><circle cx="4.5" cy="4.5" r="4.0" fill="none" stroke="#c2c2c2" stroke-width="0.8"/><path d="M1.7 4.9 L3.7 3.6 L4.9 5.1 L7.3 5.3" fill="none" stroke="#bbb" stroke-width="0.75"/></svg></td></tr><tr><td class="l lk" style="height:25.86px"><a class=cj>如何获取Bing站长工具API密钥</a></td><td class="c" style="height:25.86px"><span class=cj>已收录</span></td><td class="c" style="height:25.86px">4<svg class="ico" width="9" height="9" viewBox="0 0 9 9"><circle cx="4.5" cy="4.5" r="4.0" fill="none" stroke="#c2c2c2" stroke-width="0.8"/><path d="M1.7 4.9 L3.7 3.6 L4.9 5.1 L7.3 5.3" fill="none" stroke="#bbb" stroke-width="0.75"/></svg></td></tr><tr><td class="l lk" style="height:25.86px"><a class=cj>IMGspider Pro-更高效率图片采集WP插件</a></td><td class="c" style="height:25.86px"><span class=cj>已收录</span></td><td class="c" style="height:25.86px">4<svg class="ico" width="9" height="9" viewBox="0 0 9 9"><circle cx="4.5" cy="4.5" r="4.0" fill="none" stroke="#c2c2c2" stroke-width="0.8"/><path d="M1.7 4.9 L3.7 3.6 L4.9 5.1 L7.3 5.3" fill="none" stroke="#bbb" stroke-width="0.75"/></svg></td></tr></table></body></html>
